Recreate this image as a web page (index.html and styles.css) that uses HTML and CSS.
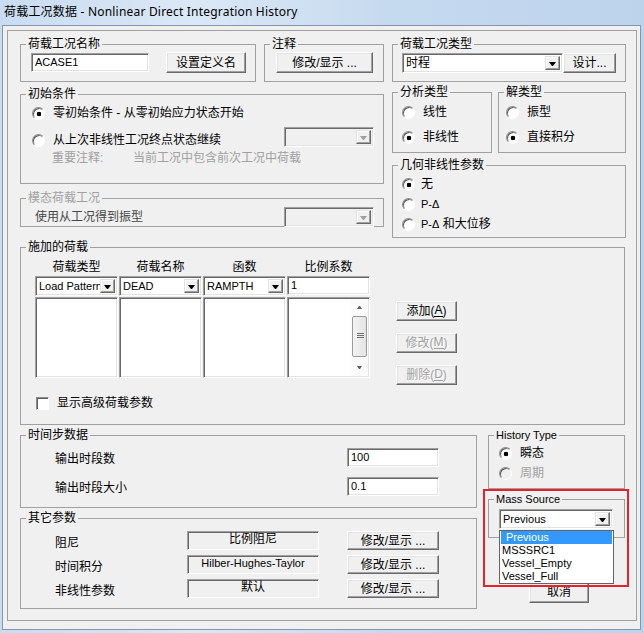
FILE: index.html
```html
<!DOCTYPE html>
<html lang="zh-CN">
<head>
<meta charset="UTF-8">
<title>荷载工况数据 - Nonlinear Direct Integration History</title>
<link rel="stylesheet" href="styles.css">
</head>
<body>
<div class="window">
  <div class="titlebar">荷载工况数据 - Nonlinear Direct Integration History</div>
  <div class="client">
    <div class="frame">

      <div class="top">
        <div class="col-left">
          <div class="row">
            <fieldset class="g g-name">
              <legend>荷载工况名称</legend>
              <div class="line">
                <div class="edit name-edit lt">ACASE1</div>
                <div class="btn name-btn">设置定义名</div>
              </div>
            </fieldset>
            <fieldset class="g g-note">
              <legend>注释</legend>
              <div class="btn note-btn">修改/显示 ...</div>
            </fieldset>
          </div>

          <fieldset class="g g-init">
            <legend>初始条件</legend>
            <div class="opt"><span class="radio on"></span>零初始条件 - 从零初始应力状态开始</div>
            <div class="init-2">
              <div class="opt"><span class="radio"></span>从上次非线性工况终点状态继续</div>
              <div class="combo off init-combo"><span class="val"></span><span class="arrow"></span></div>
            </div>
            <div class="note off-text"><span class="note-key">重要注释:</span><span>当前工况中包含前次工况中荷载</span></div>
          </fieldset>

          <fieldset class="g g-modal">
            <legend class="off-text">模态荷载工况</legend>
            <div class="modal-row">
              <span class="dim">使用从工况得到振型</span>
              <div class="combo off modal-combo"><span class="val"></span><span class="arrow"></span></div>
            </div>
          </fieldset>
        </div>

        <div class="col-right">
          <fieldset class="g g-type">
            <legend>荷载工况类型</legend>
            <div class="line">
              <div class="combo type-combo"><span class="val">时程</span><span class="arrow"></span></div>
              <div class="btn type-btn">设计...</div>
            </div>
          </fieldset>

          <div class="pair">
            <fieldset class="g g-ana">
              <legend>分析类型</legend>
              <div class="stack">
                <div class="opt"><span class="radio"></span>线性</div>
                <div class="opt"><span class="radio on"></span>非线性</div>
              </div>
            </fieldset>
            <fieldset class="g g-sol">
              <legend>解类型</legend>
              <div class="stack">
                <div class="opt"><span class="radio"></span>振型</div>
                <div class="opt"><span class="radio on"></span>直接积分</div>
              </div>
            </fieldset>
          </div>

          <fieldset class="g g-geo">
            <legend>几何非线性参数</legend>
            <div class="opt"><span class="radio on"></span>无</div>
            <div class="opt"><span class="radio"></span><span class="lt">P-Δ</span></div>
            <div class="opt"><span class="radio"></span><span><span class="lt">P-Δ</span> 和大位移</span></div>
          </fieldset>
        </div>
      </div>

      <fieldset class="g g-loads">
        <legend>施加的荷载</legend>
        <div class="loads-main">
          <div class="grid">
            <div class="hdr">荷载类型</div>
            <div class="hdr">荷载名称</div>
            <div class="hdr">函数</div>
            <div class="hdr">比例系数</div>
            <div class="combo lt"><span class="val">Load Pattern</span><span class="arrow"></span></div>
            <div class="combo lt"><span class="val">DEAD</span><span class="arrow"></span></div>
            <div class="combo lt"><span class="val">RAMPTH</span><span class="arrow"></span></div>
            <div class="edit lt">1</div>
            <div class="list"></div>
            <div class="list"></div>
            <div class="list"></div>
            <div class="list scroll">
              <div class="sb">
                <div class="sb-btn up"></div>
                <div class="sb-thumb"><span></span></div>
                <div class="sb-track"></div>
                <div class="sb-btn down"></div>
              </div>
            </div>
          </div>
          <div class="side">
            <div class="btn">添加(<u>A</u>)</div>
            <div class="btn off">修改(<u>M</u>)</div>
            <div class="btn off">删除(<u>D</u>)</div>
          </div>
        </div>
        <div class="check-row"><span class="check"></span>显示高级荷载参数</div>
      </fieldset>

      <div class="bottom">
        <div class="col-b-left">
          <fieldset class="g g-time">
            <legend>时间步数据</legend>
            <div class="field-row">
              <span class="flabel">输出时段数</span>
              <div class="edit num-edit lt">100</div>
            </div>
            <div class="field-row">
              <span class="flabel">输出时段大小</span>
              <div class="edit num-edit lt">0.1</div>
            </div>
          </fieldset>

          <fieldset class="g g-other">
            <legend>其它参数</legend>
            <div class="param-row">
              <span class="plabel">阻尼</span>
              <div class="sunk">比例阻尼</div>
              <div class="btn pbtn">修改/显示 ...</div>
            </div>
            <div class="param-row">
              <span class="plabel">时间积分</span>
              <div class="sunk lt">Hilber-Hughes-Taylor</div>
              <div class="btn pbtn">修改/显示 ...</div>
            </div>
            <div class="param-row">
              <span class="plabel">非线性参数</span>
              <div class="sunk">默认</div>
              <div class="btn pbtn">修改/显示 ...</div>
            </div>
          </fieldset>
        </div>

        <div class="col-b-right">
          <fieldset class="g g-hist">
            <legend class="lt">History Type</legend>
            <div class="stack tight">
              <div class="opt"><span class="radio on"></span>瞬态</div>
              <div class="opt off-text"><span class="radio off"></span>周期</div>
            </div>
          </fieldset>
          <fieldset class="g g-mass">
            <legend class="lt">Mass Source</legend>
            <div class="combo mass-combo lt"><span class="val">Previous</span><span class="arrow"></span></div>
          </fieldset>
          <div class="btn cancel">取消</div>
        </div>
      </div>

      <!-- 下拉列表与红框标注 -->
      <div class="highlight"></div>
      <div class="droplist lt">
        <div class="item sel">Previous</div>
        <div class="item">MSSSRC1</div>
        <div class="item">Vessel_Empty</div>
        <div class="item">Vessel_Full</div>
      </div>

    </div>
  </div>
</div>
</body>
</html>
```

FILE: styles.css
```css
* {
    box-sizing: border-box;
}

body {
    margin: 0;
    background: #c4d8ee;
    font-family: "Liberation Sans", "Noto Sans CJK SC", sans-serif;
    font-size: 12px;
    line-height: 16px;
    color: #000;
}

.lt {
    font-size: 11px;
}

.window {
    width: 644px;
    height: 633px;
    overflow: hidden;
    background: linear-gradient(90deg, #c9dcf1, #dbe8f6 30%, #c6daef 60%, #bcd3ec);
}

.titlebar {
    height: 25px;
    padding: 4px 0 0 4px;
    font-family: "Noto Sans", "Noto Sans CJK SC", sans-serif;
    font-size: 12px;
    line-height: 16px;
    letter-spacing: 0.2px;
}

.client {
    width: 639px;
    height: 605px;
    margin-left: 2px;
    border: 1px solid #8396ae;
    background: #f0f0f0;
    overflow: hidden;
}

.frame {
    position: relative;
    width: 630px;
    height: 591px;
    margin: 4px 0 0 4px;
    padding: 6px 0 0 12px;
    border: 1px solid #a0a0a0;
}

/* group boxes: each box sets --pt/--pr/--pl/--mt, the legend stays at the box edge */
fieldset.g {
    margin: var(--mt, 0px) 0 0 0;
    padding: var(--pt, 0px) var(--pr, 0px) 0 var(--pl, 0px);
    min-width: 0;
    border: 1px solid #a0a0a0;
}

fieldset.g > legend {
    height: 14px;
    margin-left: calc(5px - var(--pl, 0px));
    padding: 0 2px;
    line-height: 14px;
}

.off-text {
    color: #a0a0a0;
}

.dim {
    color: #454545;
}

/* controls */
.btn {
    display: flex;
    align-items: center;
    justify-content: center;
    background: #f0f0f0;
    border: 1px solid;
    border-color: #fff #696969 #696969 #fff;
    box-shadow: inset -1px -1px #a0a0a0, inset 1px 1px #e3e3e3;
    white-space: nowrap;
}

.btn.off {
    color: #a0a0a0;
    text-shadow: 1px 1px #fff;
}

.btn u {
    text-decoration: none;
    border-bottom: 1px solid currentColor;
    line-height: 11px;
}

.edit {
    height: 19px;
    padding: 0 3px;
    background: #fff;
    border: 1px solid;
    border-color: #a0a0a0 #fff #fff #a0a0a0;
    box-shadow: inset 1px 1px #696969, inset -1px -1px #e3e3e3;
    line-height: 17px;
    white-space: nowrap;
}

.combo {
    display: flex;
    height: 20px;
    padding: 2px;
    background: #fff;
    border: 1px solid;
    border-color: #a0a0a0 #fff #fff #a0a0a0;
    box-shadow: inset 1px 1px #696969, inset -1px -1px #e3e3e3;
}

.combo .val {
    flex: 1;
    overflow: hidden;
    padding-left: 1px;
    line-height: 14px;
    white-space: nowrap;
}

.combo .arrow {
    position: relative;
    width: 15px;
    background: #f0f0f0;
    border: 1px solid;
    border-color: #e3e3e3 #696969 #696969 #e3e3e3;
    box-shadow: inset -1px -1px #a0a0a0, inset 1px 1px #fff;
}

.combo .arrow::after {
    content: "";
    position: absolute;
    left: 3px;
    top: 5px;
    width: 1px;
    border-top: 4px solid #000;
    border-left: 3px solid transparent;
    border-right: 3px solid transparent;
}

.combo.off {
    background: #f0f0f0;
}

.combo.off .arrow::after {
    border-top-color: #a0a0a0;
}

.radio {
    flex: none;
    width: 13px;
    height: 13px;
    border-radius: 50%;
    border: 1px solid;
    border-color: #8a8a8a #fff #fff #8a8a8a;
    background: #fff;
    box-shadow: inset 1px 1px #5f5f5f;
}

.radio.on {
    background: radial-gradient(circle at 6px 6px, #000 0 2px, #fff 2.6px);
}

.radio.off {
    background: #f0f0f0;
}

.check {
    flex: none;
    width: 13px;
    height: 13px;
    background: #fff;
    border: 1px solid;
    border-color: #8a8a8a #fff #fff #8a8a8a;
    box-shadow: inset 1px 1px #5f5f5f;
}

.opt {
    display: flex;
    align-items: center;
    gap: 8px;
    height: 16px;
    white-space: nowrap;
}

.line {
    display: flex;
    align-items: center;
}

.stack {
    display: flex;
    flex-direction: column;
    gap: 9px;
}

.stack.tight {
    gap: 4px;
}

/* top area */
.top {
    display: flex;
    align-items: flex-start;
    gap: 8px;
}

.col-left {
    width: 364px;
    display: flex;
    flex-direction: column;
}

.row {
    display: flex;
    gap: 8px;
}

.g-name {
    --pl: 10px;
    --pt: 1px;
    width: 236px;
    height: 45px;
}

.name-edit {
    width: 118px;
}

.name-btn {
    width: 80px;
    height: 21px;
    margin-left: 17px;
}

.g-note {
    --pl: 11px;
    --pt: 1px;
    width: 120px;
    height: 45px;
}

.note-btn {
    width: 97px;
    height: 21px;
}

.g-init {
    --pl: 11px;
    --pt: 4px;
    --pr: 9px;
    --mt: 5px;
    height: 97px;
}

.init-2 {
    display: flex;
    margin-top: 6px;
}

.init-2 .opt {
    margin-top: 5px;
}

.init-combo {
    width: 90px;
    margin-left: auto;
}

.note {
    display: flex;
    margin-top: 2px;
    padding-left: 20px;
    white-space: nowrap;
}

.note-key {
    width: 81px;
}

.g-modal {
    --pl: 14px;
    --pt: 2px;
    --pr: 9px;
    --mt: 7px;
    height: 36px;
}

.modal-row {
    display: flex;
    align-items: center;
    justify-content: space-between;
}

.modal-combo {
    width: 90px;
}

.col-right {
    width: 234px;
    display: flex;
    flex-direction: column;
}

.g-type {
    --pl: 9px;
    --pt: 2px;
    height: 45px;
}

.type-combo {
    width: 161px;
}

.type-btn {
    width: 53px;
    height: 20px;
}

.pair {
    display: flex;
    gap: 6px;
    margin-top: 3px;
}

.g-ana {
    --pl: 9px;
    --pt: 5px;
    width: 100px;
    height: 68px;
}

.g-sol {
    --pl: 7px;
    --pt: 5px;
    width: 128px;
    height: 68px;
}

.g-geo {
    --pl: 9px;
    --pt: 2px;
    --mt: 5px;
    height: 80px;
}

.g-geo .opt {
    height: 20px;
    gap: 6px;
}

/* applied loads */
.g-loads {
    --pl: 14px;
    --pt: 5px;
    --mt: 2px;
    width: 605px;
    height: 185px;
}

.loads-main {
    display: flex;
    align-items: flex-start;
    height: 119px;
}

.grid {
    display: grid;
    grid-template-columns: repeat(4, 83px);
    grid-template-rows: 16px 20px 81px;
    gap: 1px;
}

.hdr {
    text-align: center;
    line-height: 16px;
}

.list {
    background: #fff;
    border: 1px solid;
    border-color: #a0a0a0 #fff #fff #a0a0a0;
    box-shadow: inset 1px 1px #696969, inset -1px -1px #e3e3e3;
}

.list.scroll {
    display: flex;
    justify-content: flex-end;
    padding: 1px;
}

.sb {
    width: 17px;
    display: flex;
    flex-direction: column;
    background: #fbfbfb;
}

.sb-btn {
    position: relative;
    height: 17px;
}

.sb-btn::after {
    content: "";
    position: absolute;
    left: 6px;
    width: 1px;
    border-left: 2px solid transparent;
    border-right: 2px solid transparent;
}

.sb-btn.up::after {
    top: 7px;
    border-bottom: 3px solid #606060;
}

.sb-btn.down::after {
    top: 7px;
    border-top: 3px solid #606060;
}

.sb-thumb {
    position: relative;
    height: 41px;
    margin: 0 1px;
    background: linear-gradient(90deg, #f3f3f3, #e4e4e4);
    border: 1px solid #9a9a9a;
    border-radius: 2px;
}

.sb-thumb span {
    position: absolute;
    left: 4px;
    top: 16px;
    width: 7px;
    height: 5px;
    border-top: 1px solid #707070;
    border-bottom: 1px solid #707070;
}

.sb-thumb span::after {
    content: "";
    position: absolute;
    left: 0;
    top: 1px;
    width: 7px;
    border-top: 1px solid #707070;
}

.sb-track {
    flex: 1;
}

.side {
    display: flex;
    flex-direction: column;
    gap: 12px;
    margin-left: 26px;
    padding-top: 42px;
}

.side .btn {
    width: 61px;
    height: 20px;
}

.check-row {
    display: flex;
    align-items: center;
    gap: 8px;
    height: 16px;
    margin-top: 17px;
    padding-left: 1px;
}

/* bottom area */
.bottom {
    display: flex;
    gap: 11px;
    margin-top: 3px;
}

.col-b-left {
    width: 457px;
    display: flex;
    flex-direction: column;
}

.g-time {
    --pl: 34px;
    --pt: 6px;
    height: 80px;
}

.field-row {
    display: flex;
    align-items: center;
    height: 19px;
    margin-bottom: 10px;
}

.flabel {
    width: 292px;
    padding-top: 3px;
}

.num-edit {
    width: 92px;
}

.g-other {
    --pl: 34px;
    --pt: 6px;
    --mt: 3px;
    height: 98px;
}

.param-row {
    display: flex;
    align-items: center;
    height: 19px;
    margin-bottom: 5px;
}

.plabel {
    width: 132px;
    padding-top: 4px;
}

.sunk {
    width: 132px;
    height: 19px;
    border: 1px solid;
    border-color: #a0a0a0 #fff #fff #a0a0a0;
    box-shadow: inset 1px 1px #696969;
    text-align: center;
    line-height: 15px;
    white-space: nowrap;
}

.pbtn {
    width: 92px;
    height: 19px;
    margin-left: 28px;
}

.col-b-right {
    width: 137px;
    display: flex;
    flex-direction: column;
}

.g-hist {
    --pl: 10px;
    --pt: 3px;
    height: 61px;
}

.g-mass {
    --pl: 10px;
    --pt: 3px;
    --mt: 3px;
    height: 46px;
}

.mass-combo {
    width: 114px;
}

.cancel {
    width: 60px;
    height: 23px;
    margin: 42px 0 0 41px;
}

/* overlays */
.highlight {
    position: absolute;
    left: 475px;
    top: 458px;
    width: 146px;
    height: 98px;
    border: 2px solid #e5212b;
}

.droplist {
    position: absolute;
    left: 491px;
    top: 499px;
    width: 115px;
    background: #fff;
    border: 1px solid #646464;
}

.item {
    height: 13px;
    padding-left: 2px;
    line-height: 13px;
    white-space: nowrap;
}

.item.sel {
    margin: 0 1px;
    padding-left: 5px;
    background: #3399ff;
    color: #fff;
}
```
